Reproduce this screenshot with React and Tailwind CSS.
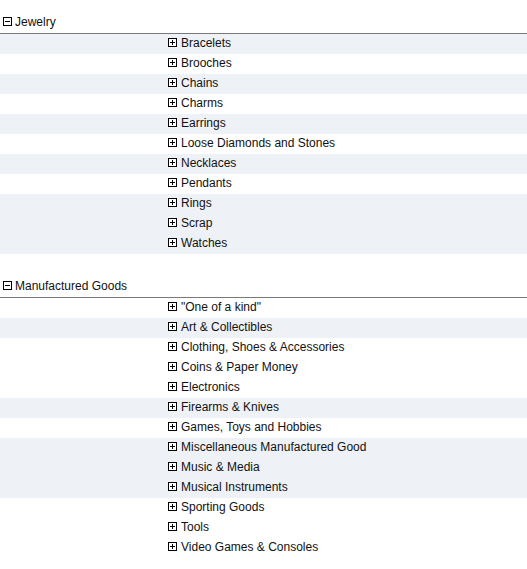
import React from 'react';

const sections = [
    {
        title: 'Jewelry',
        items: [
            ['Bracelets', true],
            ['Brooches', false],
            ['Chains', true],
            ['Charms', false],
            ['Earrings', true],
            ['Loose Diamonds and Stones', false],
            ['Necklaces', true],
            ['Pendants', false],
            ['Rings', true],
            ['Scrap', true],
            ['Watches', true],
        ],
    },
    {
        title: 'Manufactured Goods',
        items: [
            ['"One of a kind"', false],
            ['Art & Collectibles', true],
            ['Clothing, Shoes & Accessories', false],
            ['Coins & Paper Money', false],
            ['Electronics', false],
            ['Firearms & Knives', true],
            ['Games, Toys and Hobbies', false],
            ['Miscellaneous Manufactured Good', true],
            ['Music & Media', true],
            ['Musical Instruments', true],
            ['Sporting Goods', false],
            ['Tools', false],
            ['Video Games & Consoles', false],
        ],
    },
];

const ToggleBox = ({ open }) => (
    <svg width="9" height="9" viewBox="0 0 9 9" className="shrink-0" shapeRendering="crispEdges">
        <rect x="0.5" y="0.5" width="8" height="8" fill="white" stroke="#000" />
        <line x1="2" y1="4.5" x2="7" y2="4.5" stroke="#000" />
        {!open && <line x1="4.5" y1="2" x2="4.5" y2="7" stroke="#000" />}
    </svg>
);

export default function App() {
    return (
        <div className="bg-white text-[12px] text-[#111] pt-[14px] pb-4" style={{ fontFamily: '"Liberation Sans", Arial, sans-serif' }}>
            {sections.map((section, sIdx) => (
                <div key={section.title} className={sIdx > 0 ? 'mt-[24px]' : ''}>
                    {/* category header */}
                    <div className="h-5 flex items-center gap-[3px] pl-[3px] pb-[4px] border-b border-[#7a7a7a]">
                        <ToggleBox open />
                        <span>{section.title}</span>
                    </div>
                    {section.items.map(([label, shaded]) => (
                        <div key={label} className={`h-5 flex items-center gap-1 pl-[168px] pb-[3px] ${shaded ? 'bg-[#eef1f6]' : 'bg-white'}`}>
                            <ToggleBox />
                            <span>{label}</span>
                        </div>
                    ))}
                </div>
            ))}
        </div>
    );
}
